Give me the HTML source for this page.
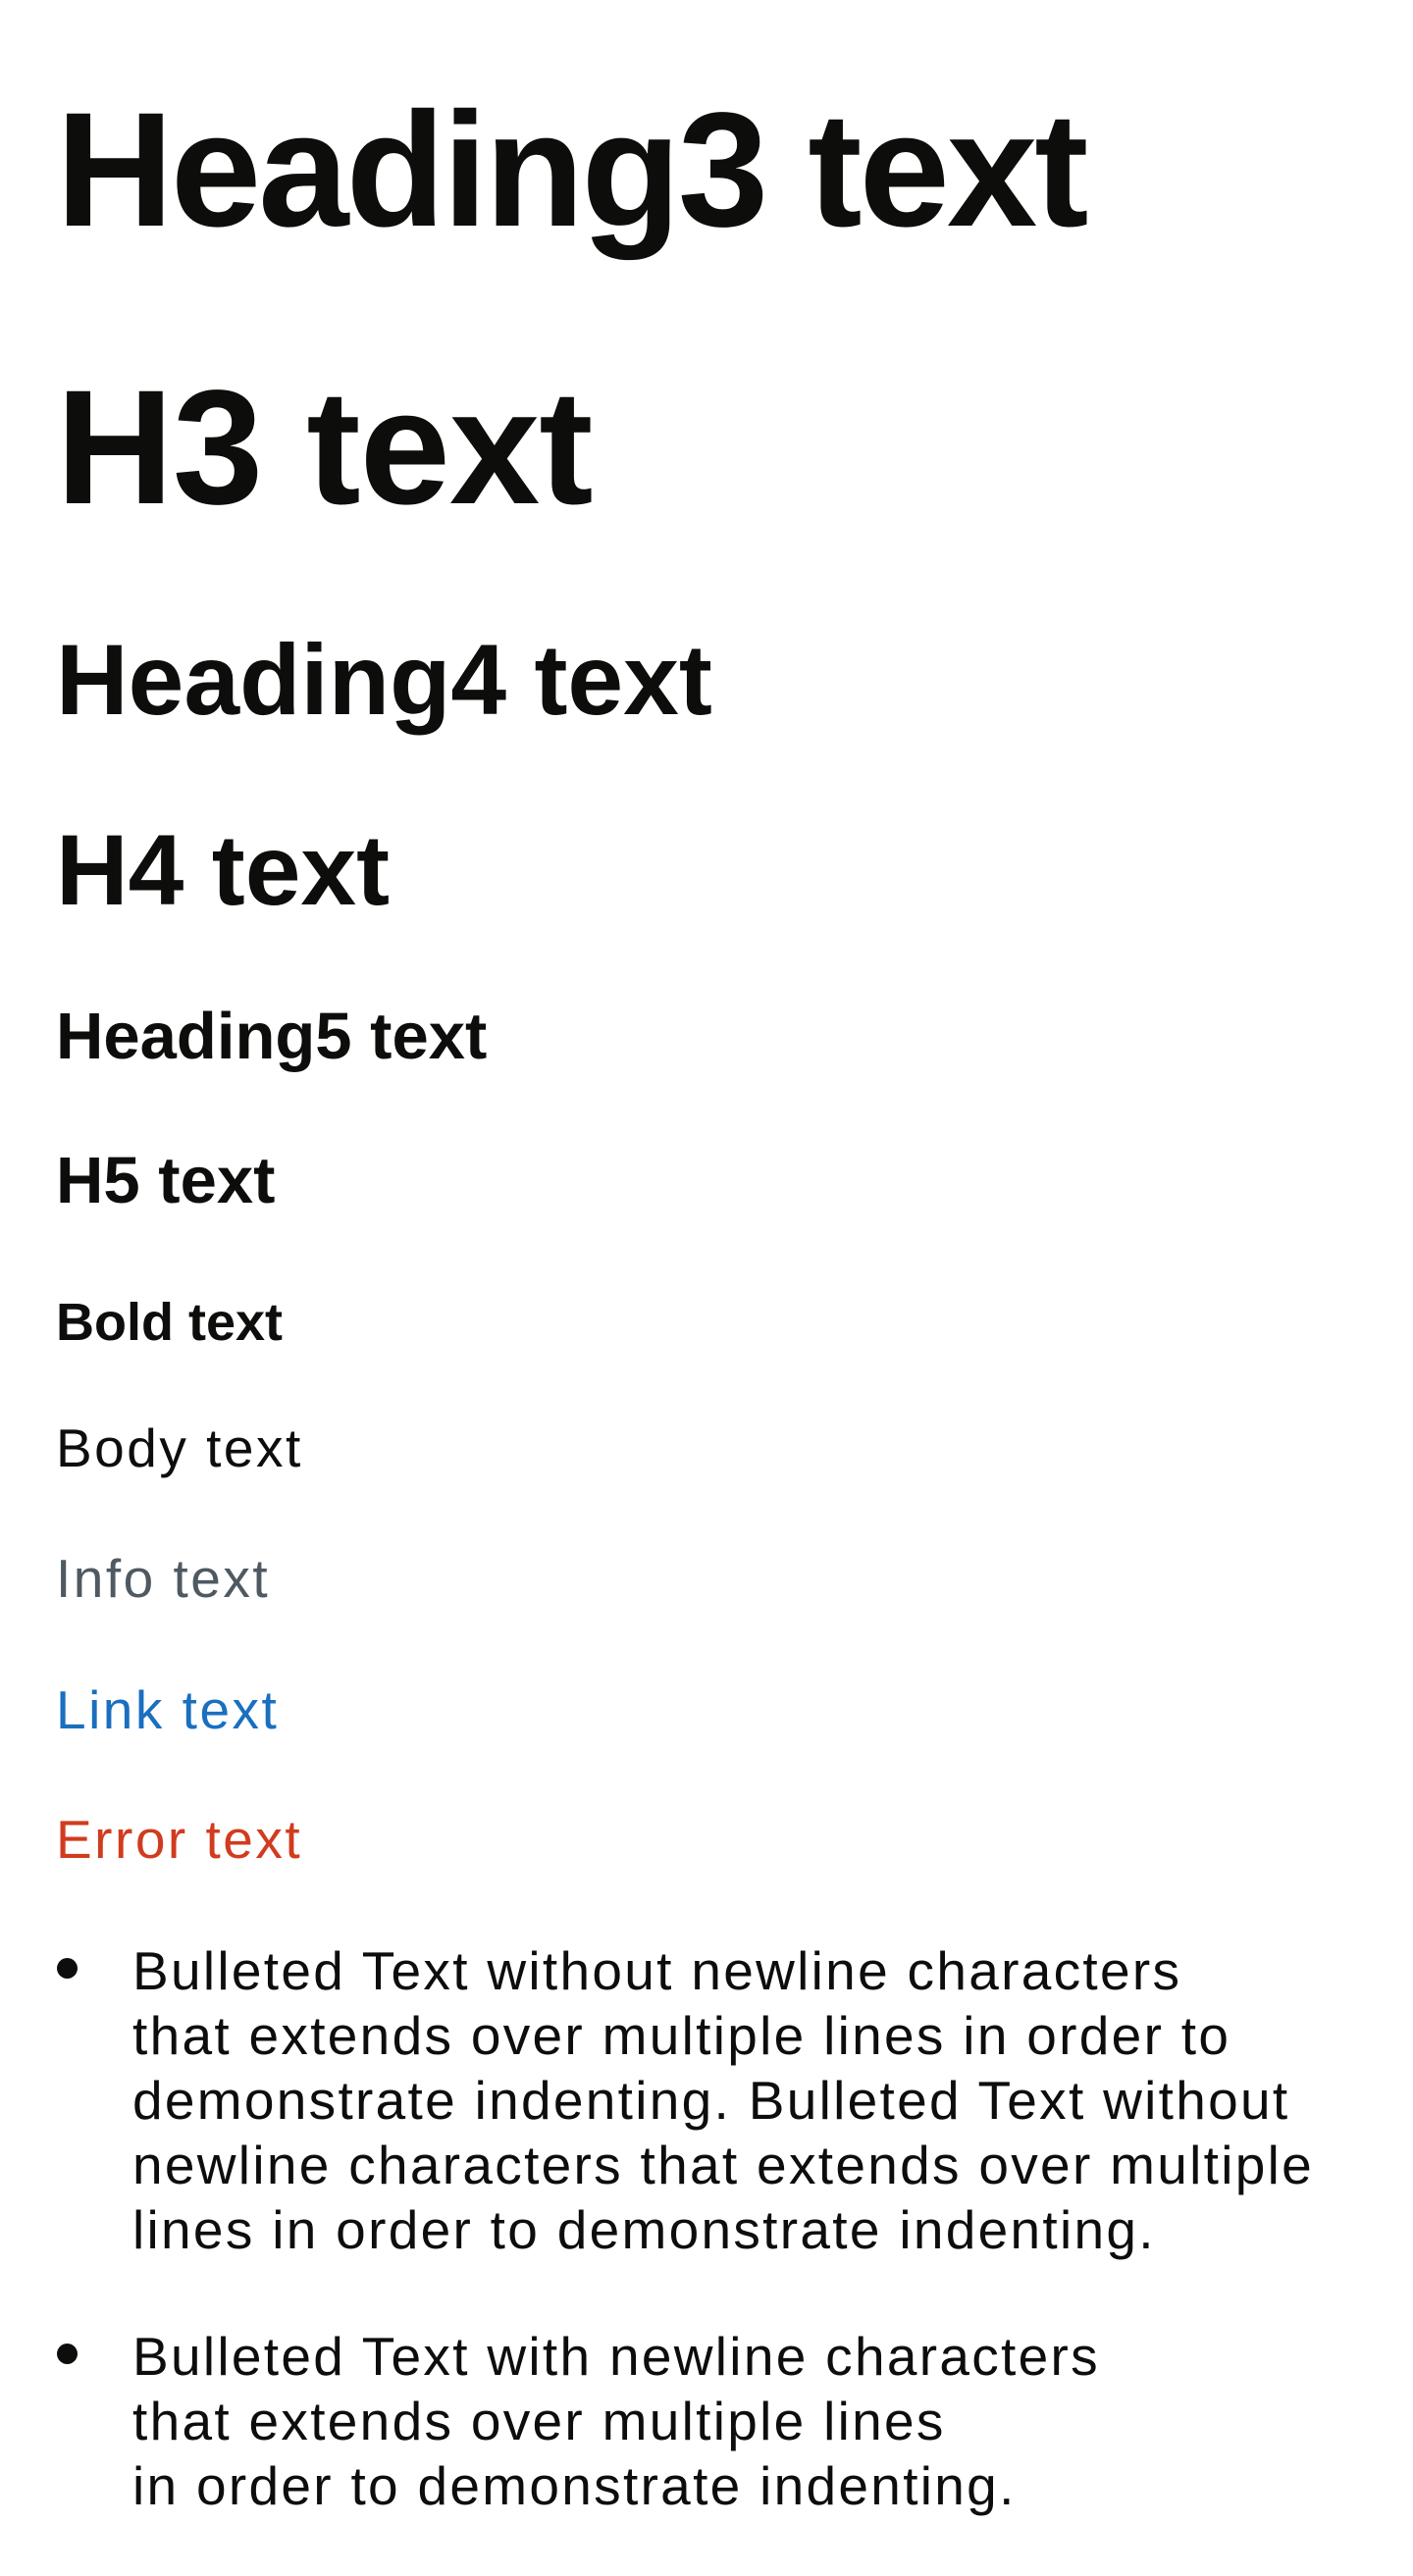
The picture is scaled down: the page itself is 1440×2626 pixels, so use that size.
<!DOCTYPE html>
<html><head><meta charset="utf-8"><style>
html,body{margin:0;padding:0;background:#fff;}
body{width:1440px;height:2626px;position:relative;overflow:hidden;font-family:"Liberation Sans",Arial,sans-serif;color:#0d0e0c;}
.t{position:absolute;left:57px;line-height:1;white-space:nowrap;}
.b{font-weight:bold;}
.body{font-size:55px;letter-spacing:2.5px;}
ul{position:absolute;left:0;margin:0;padding:0;list-style:none;}
li{position:relative;padding-left:135px;font-size:55px;line-height:66px;letter-spacing:2.3px;white-space:nowrap;}
li:before{content:"";position:absolute;left:58px;top:20px;width:21px;height:21px;border-radius:50%;background:#0d0e0c;}
</style></head><body>
<div class="t b" style="top:91px;font-size:166px;letter-spacing:-3px;">Heading3 text</div>
<div class="t b" style="top:374px;font-size:166px;letter-spacing:-1px;">H3 text</div>
<div class="t b" style="top:642px;font-size:102px;">Heading4 text</div>
<div class="t b" style="top:836px;font-size:102px;">H4 text</div>
<div class="t b" style="top:1023px;font-size:67px;">Heading5 text</div>
<div class="t b" style="top:1170px;font-size:67px;">H5 text</div>
<div class="t b" style="top:1321px;font-size:54px;">Bold text</div>
<div class="t body" style="top:1449px;">Body text</div>
<div class="t body" style="top:1582px;color:#4f5961;">Info text</div>
<div class="t body" style="top:1716px;color:#1a6fbf;">Link text</div>
<div class="t body" style="top:1848px;color:#d13b1e;">Error text</div>
<ul style="top:1976px;"><li>Bulleted Text without newline characters<br>that extends over multiple lines in order to<br>demonstrate indenting. Bulleted Text without<br>newline characters that extends over multiple<br>lines in order to demonstrate indenting.</li></ul>
<ul style="top:2369px;"><li>Bulleted Text with newline characters<br>that extends over multiple lines<br>in order to demonstrate indenting.</li></ul>
</body></html>
